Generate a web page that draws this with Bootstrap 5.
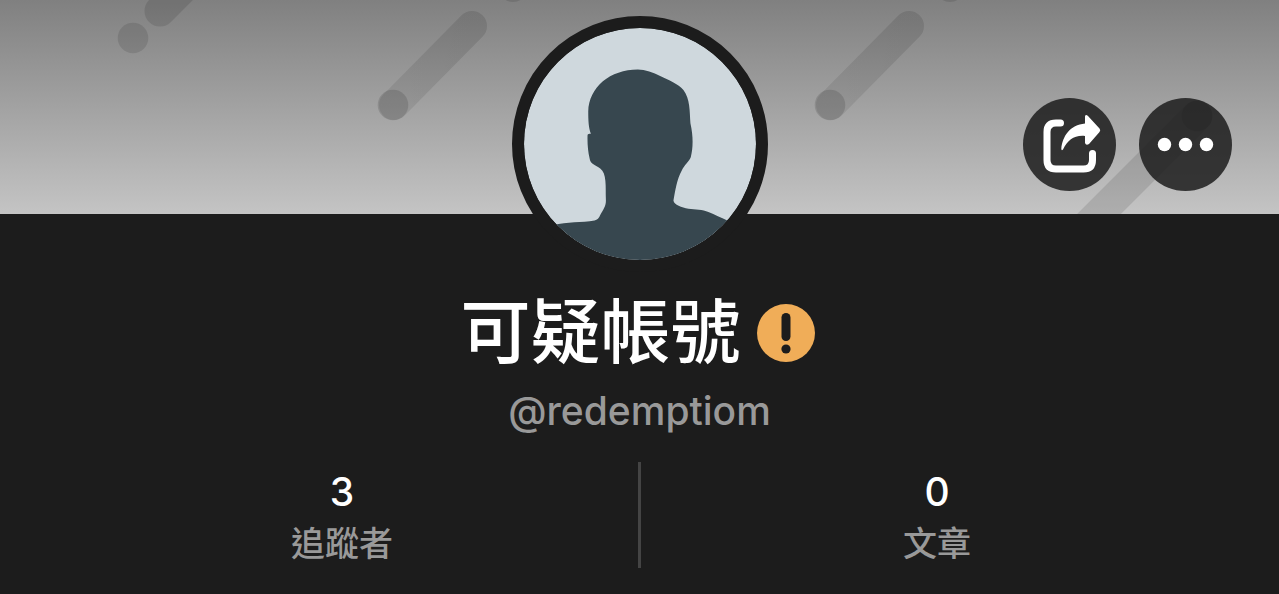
<!DOCTYPE html>
<html lang="zh-Hant">
<head>
<meta charset="utf-8">
<meta name="viewport" content="width=device-width, initial-scale=1">
<title>可疑帳號</title>
<link href="https://cdn.jsdelivr.net/npm/bootstrap@5.3.0/dist/css/bootstrap.min.css" rel="stylesheet">
<style>
  body { background: #1c1c1c; color: #fff; font-family: Inter, "Noto Sans CJK TC", sans-serif; }
  .cover { height: 214px; padding: 0 47px; background: linear-gradient(#808080, #c4c4c4); }
  .cover-art { inset: 0; }
  .cover-actions { gap: 23px; padding-top: 98px; }
  .round-btn { width: 93px; height: 93px; background: rgba(28, 28, 28, .85); }
  .avatar { width: 256px; height: 256px; margin-top: -198px; border: 12px solid #1c1c1c; background: #1c1c1c; }
  .title-row { gap: 16px; margin-top: 11px; }
  .display-name { font-size: 70px; line-height: 100px; font-weight: 500; }
  .handle { font-size: 39px; line-height: 56px; color: #999; font-weight: 500; }
  .stats { padding: 0 46px; margin-top: 23px; }
  .stat { height: 106px; padding-top: 4px; color: #fff; }
  .stat-value { font-size: 39px; line-height: 52px; font-weight: 500; }
  .stat-label { font-size: 34px; line-height: 52px; color: #999; font-weight: 500; }
  .stat-rule { width: 3px; background: #444; }
</style>
</head>
<body>
<header class="cover position-relative overflow-hidden">
  <svg class="cover-art position-absolute" width="1279" height="214" aria-hidden="true">
    <defs>
      <linearGradient id="streak" gradientUnits="userSpaceOnUse" x1="473" y1="26" x2="393" y2="105">
        <stop offset="0" stop-opacity=".11"/><stop offset="1" stop-opacity=".08"/>
      </linearGradient>
      <g id="comet">
        <path d="M394 105 472 26" stroke="url(#streak)" stroke-width="30" stroke-linecap="round"/>
        <circle cx="393" cy="105" r="15.300" fill-opacity=".13"/>
      </g>
    </defs>
    <g stroke="#000" stroke-opacity=".11" stroke-width="31" stroke-linecap="round">
      <path d="M160 11 240 -69"/>
      <path d="M1197 116 1057 256"/>
    </g>
    <use href="#comet"/>
    <use href="#comet" x="437"/>
    <circle cx="133" cy="38" r="15.300" fill-opacity=".11"/>
    <circle cx="1197" cy="116" r="15.300" fill-opacity=".14"/>
    <circle cx="513" cy="-13" r="15" fill-opacity=".11"/>
    <circle cx="950" cy="-13" r="15" fill-opacity=".11"/>
  </svg>
  <div class="cover-actions d-flex justify-content-end position-relative">
    <button type="button" class="round-btn btn rounded-circle border-0 p-0" aria-label="分享">
      <svg class="d-block" width="93" height="93" viewBox="0 0 93 93" fill="#fff">
        <path d="M37.500 25H33q-9 0-9 9V62q0 9 9 9H60.500q9 0 9-9V55.500" fill="none" stroke="#fff" stroke-width="7" stroke-linecap="round"/>
        <path d="M38.300 51C39.500 38 47 27 62 25.500V18.500Q62.500 16 65 18L76.500 30.500Q78 32 76.500 34L66 46Q63 48 62 45V38C51 37 45 42 40 51.500Q38.500 53 38.300 51Z"/>
      </svg>
    </button>
    <button type="button" class="round-btn btn rounded-circle border-0 p-0" aria-label="更多">
      <svg class="d-block" width="93" height="93" viewBox="0 0 93 93" fill="#fff">
        <circle cx="25.500" cy="46.500" r="6.700"/><circle cx="46.500" cy="46.500" r="6.700"/><circle cx="67.500" cy="46.500" r="6.700"/>
      </svg>
    </button>
  </div>
</header>
<main class="text-center">
  <div class="avatar rounded-circle overflow-hidden mx-auto position-relative">
    <svg class="d-block w-100 h-100 rounded-circle" viewBox="71 84 697 697" role="img" aria-label="頭像">
      <path fill="#cfd8dd" d="M71 84h697v697H71z"/>
      <path fill="#37474f" d="M160 676C200 665 245 669 283 662Q295 660 300 646C310 628 318 618 317 600C316 560 320 520 300 506C286 494 270 494 268 475C263 455 261 430 262 405Q265 400 272 402C265 385 264 360 264 335C266 262 330 209 413 209C435 209 460 219 480 228C505 240 535 252 550 270C570 296 569 335 571 370C580 410 579 445 572 472C566 487 553 494 545 512C530 540 526 570 520 602C522 616 545 622 565 627C585 630 608 629 625 637C645 645 662 654 682 662L780 781H71Z"/>
    </svg>
  </div>
  <div class="title-row d-flex justify-content-center align-items-center pe-1">
    <h1 class="display-name mb-0">可疑帳號</h1>
    <svg width="58" height="58" viewBox="0 0 58 58" role="img" aria-label="警告">
      <circle cx="29" cy="29" r="29" fill="#f0ad58"/>
      <rect x="24.500" y="9" width="9" height="28" rx="4.500" fill="#1c1c1c"/>
      <circle cx="29" cy="45" r="4.600" fill="#1c1c1c"/>
    </svg>
  </div>
  <p class="handle mb-0">@redemptiom</p>
  <div class="stats d-flex">
    <a href="#followers" class="stat d-block flex-fill w-50 text-decoration-none">
      <div class="stat-value">3</div>
      <div class="stat-label">追蹤者</div>
    </a>
    <div class="stat-rule flex-shrink-0"></div>
    <a href="#posts" class="stat d-block flex-fill w-50 text-decoration-none">
      <div class="stat-value">0</div>
      <div class="stat-label">文章</div>
    </a>
  </div>
</main>
<script src="https://cdn.jsdelivr.net/npm/bootstrap@5.3.0/dist/js/bootstrap.bundle.min.js"></script>
</body>
</html>
